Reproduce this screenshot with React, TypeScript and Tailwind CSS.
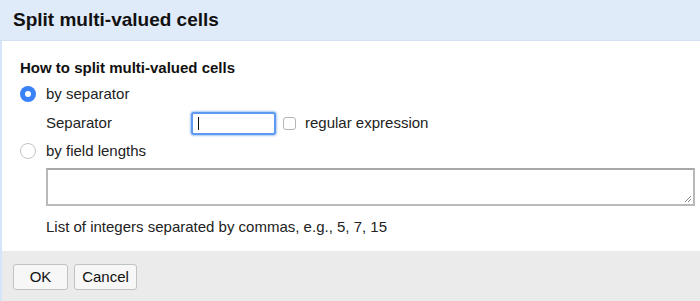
import React from "react";

export default function App() {
  return (
    <div
      className="w-[700px] h-[301px] flex flex-col bg-white text-[#222] overflow-hidden"
      style={{ fontFamily: '"Liberation Sans", Arial, sans-serif' }}
    >
      {/* header */}
      <div className="h-[41px] shrink-0 bg-[#e0ebf9] border-b border-[#d3e1f5] flex items-center pl-[13px]">
        <h1 className="text-[19px] font-bold text-[#111]">Split multi-valued cells</h1>
      </div>

      {/* body */}
      <div className="flex-1 flex flex-col border-l-2 border-[#d6e4fa] pl-[18px] pt-[17px]">
        <div className="text-[15px] font-bold text-[#111] leading-[20px]">How to split multi-valued cells</div>

        <label className="flex items-center h-[22px] mt-[5px] text-[15px]">
          <span className="w-[16px] h-[16px] rounded-full bg-[#3b82f6] flex items-center justify-center">
            <span className="w-[6px] h-[6px] rounded-full bg-white" />
          </span>
          <span className="ml-[10px]">by separator</span>
        </label>

        <div className="flex items-center h-[28px] mt-[4px] pl-[26px] text-[15px]">
          <span className="w-[145px]">Separator</span>
          <div className="w-[85px] h-[23px] rounded-[3px] border-2 border-[#5e9bf0] shadow-[0_0_2px_1px_#a9c8f7] bg-white flex items-center pl-[5px]">
            <span className="w-px h-[13px] bg-[#111]" />
          </div>
          <span className="ml-[7px] w-[13px] h-[13px] rounded-[3px] border border-[#b5b5b5] bg-white" />
          <span className="ml-[9px]">regular expression</span>
        </div>

        <label className="flex items-center h-[22px] mt-[3px] text-[15px]">
          <span className="w-[16px] h-[16px] rounded-full border border-[#c4c4c4] bg-white" />
          <span className="ml-[10px]">by field lengths</span>
        </label>

        <div className="ml-[26px] mt-[6px] w-[649px] h-[38px] border-2 border-[#b9b9b9] border-t-[#a8a8a8] bg-white relative">
          <svg className="absolute right-[1px] bottom-[1px]" width="9" height="9" viewBox="0 0 9 9">
            <path d="M8 2 L2 8 M8 5 L5 8" stroke="#8a8a8a" strokeWidth="1" />
          </svg>
        </div>

        <div className="pl-[26px] mt-[12px] text-[15px] leading-[18px]">
          List of integers separated by commas, e.g., 5, 7, 15
        </div>
      </div>

      {/* footer */}
      <div className="h-[50px] shrink-0 bg-[#ebebeb] border-l-2 border-[#d6e4fa] flex items-center gap-[6px] pl-[11px] pt-[2px]">
        <button className="w-[55px] h-[26px] rounded-[3px] border border-[#c2c2c2] bg-[#f7f7f7] text-[15px] text-[#111]">
          OK
        </button>
        <button className="w-[63px] h-[26px] rounded-[3px] border border-[#c2c2c2] bg-[#f7f7f7] text-[15px] text-[#111]">
          Cancel
        </button>
      </div>
    </div>
  );
}
